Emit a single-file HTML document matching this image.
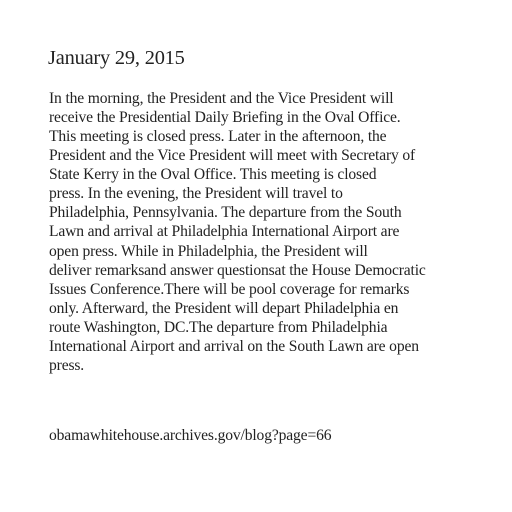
<!DOCTYPE html>
<html><head><meta charset="utf-8"><style>
html,body{margin:0;padding:0;background:#fff;width:512px;height:512px;overflow:hidden}
body{font-family:"Liberation Serif",serif;color:#222}
h1{position:absolute;left:48px;top:45px;margin:0;font-weight:normal;font-size:20.4px;line-height:26px;letter-spacing:-0.2px}
.p{position:absolute;left:49px;top:89px;font-size:15.6px;line-height:19.07px;white-space:nowrap;letter-spacing:-0.15px}
.u{position:absolute;left:49px;top:426px;font-size:15.6px;line-height:19px;letter-spacing:-0.15px}
</style></head><body>
<h1>January 29, 2015</h1>
<div class="p">In the morning, the President and the Vice President will<br>receive the Presidential Daily Briefing in the Oval Office.<br>This meeting is closed press. Later in the afternoon, the<br>President and the Vice President will meet with Secretary of<br>State Kerry in the Oval Office. This meeting is closed<br>press. In the evening, the President will travel to<br>Philadelphia, Pennsylvania. The departure from the South<br>Lawn and arrival at Philadelphia International Airport are<br>open press. While in Philadelphia, the President will<br>deliver remarksand answer questionsat the House Democratic<br>Issues Conference.There will be pool coverage for remarks<br>only. Afterward, the President will depart Philadelphia en<br>route Washington, DC.The departure from Philadelphia<br>International Airport and arrival on the South Lawn are open<br>press.</div>
<div class="u">obamawhitehouse.archives.gov/blog?page=66</div>
</body></html>
